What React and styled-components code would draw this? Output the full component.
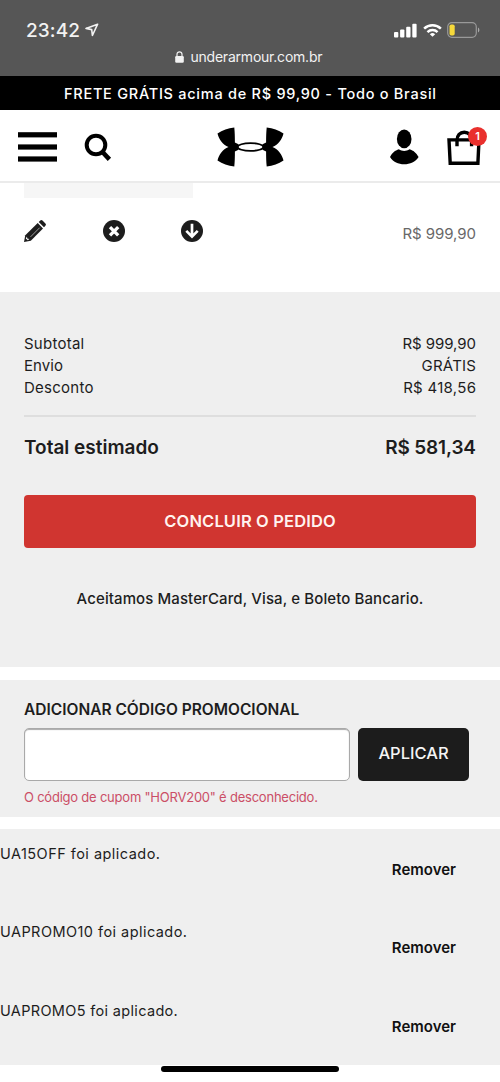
import React from 'react';
import styled, { createGlobalStyle } from 'styled-components';

const GlobalStyle = createGlobalStyle`
  *, *::before, *::after { box-sizing: border-box; }
  body { margin: 0; background: #fff; font-family: Inter, "Liberation Sans", sans-serif; color: #1d1d1d; }
  button, input { font-family: inherit; }
  button { cursor: pointer; border: 0; padding: 0; background: none; color: inherit; }
  svg { display: block; }
`;

const Screen = styled.div`
  width: 500px;
  height: 1082px;
  overflow: hidden;
  background: #fff;
`;

const Label = styled.span`
  white-space: nowrap;
  font-size: ${(p) => p.$size}px;
  font-weight: ${(p) => p.$weight || 400};
  letter-spacing: ${(p) => p.$track || 0}px;
  margin-right: ${(p) => -(p.$track || 0)}px;
`;

const BrowserBar = styled.div`
  height: 76px;
  background: #565656;
  color: #f2f2f2;
`;

const StatusRow = styled.div`
  height: 48px;
  padding: 12px 20px 0 26px;
  display: flex;
  align-items: center;
  justify-content: space-between;
`;

const Cluster = styled.div`
  display: flex;
  align-items: center;
  gap: ${(p) => p.$gap}px;
`;

const Address = styled.div`
  display: flex;
  align-items: center;
  justify-content: center;
  gap: 6px;
  height: 17px;
  padding-right: 2px;
`;

const Banner = styled.div`
  height: 34px;
  display: flex;
  align-items: center;
  justify-content: center;
  background: #000;
  color: #fff;
`;

const Header = styled.header`
  height: 73px;
  padding: 3px 17px 0 18px;
  border-bottom: 2px solid #ebebeb;
  display: grid;
  grid-template-columns: 1fr 68px 1fr;
  align-items: center;
`;

const HeaderSide = styled.div`
  display: flex;
  align-items: center;
  justify-content: ${(p) => (p.$end ? 'flex-end' : 'flex-start')};
  gap: 27px;
`;

const Bag = styled.button`
  position: relative;
  width: 41px;
  height: 40px;
  margin-right: -5px;
`;

const Badge = styled.span`
  position: absolute;
  top: 0;
  right: 1px;
  width: 19px;
  height: 19px;
  border-radius: 50%;
  background: #e9302d;
  color: #fff;
  font-size: 11px;
  font-weight: 600;
  line-height: 19px;
  text-align: center;
`;

const Product = styled.section`
  height: 109px;
  padding: 0 24px;
`;

const Strip = styled.div`
  width: 169px;
  height: 15px;
  background: #f6f6f6;
`;

const ProductRow = styled.div`
  display: flex;
  justify-content: space-between;
  align-items: center;
  height: 66px;
  color: #686868;
`;

const ItemPrice = styled.div`
  padding-top: 4px;
`;

const Actions = styled.div`
  display: flex;
  gap: 56.5px;
  color: #1d1d1d;
`;

const Summary = styled.section`
  height: 375px;
  padding: 41px 24px 0;
  background: #efefef;
`;

const SummaryRow = styled.div`
  display: flex;
  justify-content: space-between;
  line-height: 21.9px;
`;

const TotalRow = styled(SummaryRow)`
  margin-top: 16px;
  padding-top: 18px;
  border-top: 2px solid #dedede;
  line-height: 25px;
`;

const Checkout = styled.button`
  display: block;
  width: 100%;
  height: 53px;
  margin-top: 35px;
  border-radius: 4px;
  background: #d03530;
  color: #fff3ef;
`;

const Accepted = styled.p`
  margin: 40px 0 0;
  text-align: center;
  line-height: 20px;
`;

const Promo = styled.section`
  height: 137px;
  margin-top: 13px;
  padding: 20px 31px 0 24px;
  background: #efefef;
`;

const PromoTitle = styled.h2`
  display: flex;
  margin: 0 0 8px;
  line-height: 20px;
`;

const PromoForm = styled.div`
  display: flex;
  gap: 8px;
`;

const CodeInput = styled.input`
  width: 326px;
  height: 53px;
  border: 1px solid #a9a9a9;
  border-radius: 5px;
  background: #fff;
  box-shadow: inset 0 1px 1px #aaa;
  outline: none;
`;

const Apply = styled.button`
  width: 111px;
  height: 53px;
  padding-bottom: 3px;
  border-radius: 5px;
  background: #1c1c1c;
  color: #f5f5f5;
`;

const ErrorLine = styled.p`
  display: flex;
  margin: 7px 0 0;
  line-height: 18px;
  color: #cb4e66;
`;

const Coupons = styled.section`
  height: 236px;
  margin-top: 12px;
  background: #efefef;
`;

const Coupon = styled.div`
  height: 78.4px;
  padding: 15px 44px 0 0;
  display: flex;
  justify-content: space-between;
  align-items: flex-start;
  line-height: 20px;
`;

const Remove = styled.button`
  margin-top: 16px;
  line-height: 20px;
  color: #111;
`;

const HomeBar = styled.div`
  width: 178px;
  height: 6px;
  margin: 1px auto 0;
  border-radius: 3px;
  background: #000;
`;

const totals = [
  ['Subtotal', 'R$ 999,90', 0.25, -0.05],
  ['Envio', 'GRÁTIS', 0.05, 0.25],
  ['Desconto', 'R$ 418,56', 0.25, 0.3],
];

const coupons = [
  ['UA15OFF', 0.47],
  ['UAPROMO10', 0.45],
  ['UAPROMO5', 0.33],
];

const LocationIcon = () => (
  <svg width="14" height="14" viewBox="0 0 14 14" fill="none" stroke="#f2f2f2" strokeWidth="1.6" strokeLinejoin="round">
    <path d="M12.6 1.2 1 5.4l5.7 1.2.7 5.9Z" />
  </svg>
);

const SignalIcon = () => (
  <svg width="23" height="15" viewBox="0 0 23 15" fill="#fff">
    <rect x="0" y="9" width="4.3" height="5.5" rx="1" />
    <rect x="6.1" y="6.6" width="4.3" height="7.9" rx="1" />
    <rect x="12.2" y="3.8" width="4.3" height="10.7" rx="1" />
    <rect x="18.3" y="0.7" width="4.3" height="13.8" rx="1" />
  </svg>
);

const WifiIcon = () => (
  <svg width="19" height="15" viewBox="0 0 20 15" fill="none" stroke="#fff" strokeWidth="2.6">
    <path d="M1.2 5.6a12.6 12.6 0 0 1 17.6 0" />
    <path d="M4.7 9.1a7.6 7.6 0 0 1 10.6 0" />
    <path d="M10 14.2 7.2 11.5a4 4 0 0 1 5.6 0Z" fill="#fff" stroke="none" />
  </svg>
);

const BatteryIcon = () => (
  <svg width="33" height="16" viewBox="0 0 33 16">
    <rect x="0.7" y="0.7" width="28.6" height="14.6" rx="4.2" fill="none" stroke="#999" strokeWidth="1.2" />
    <path d="M31 5.5c1.8.8 1.8 4.2 0 5Z" fill="#aaa" />
    <rect x="2.5" y="2.5" width="5.2" height="11" rx="1.8" fill="#f6d93b" />
  </svg>
);

const LockIcon = () => (
  <svg width="9" height="12" viewBox="0 0 9 12">
    <rect x="0.2" y="5" width="8.6" height="6.8" rx="1.2" fill="#f2f2f2" />
    <path d="M2 5.5V3.3a2.5 2.5 0 0 1 5 0v2.2" fill="none" stroke="#f2f2f2" strokeWidth="1.2" />
  </svg>
);

const MenuIcon = () => (
  <svg width="39" height="30" viewBox="0 0 39 30" fill="#000">
    <rect width="39" height="5.2" y="0.2" />
    <rect width="39" height="5.2" y="12.4" />
    <rect width="39" height="5.2" y="24.4" />
  </svg>
);

const SearchIcon = () => (
  <svg width="28" height="29" viewBox="0 0 28 29" fill="none" stroke="#000">
    <circle cx="12" cy="12" r="9.3" strokeWidth="4" />
    <path d="m17.8 18.2 7.6 8.2" strokeWidth="4.6" />
  </svg>
);

const LogoHalf = () => (
  <path d="M0.500 6.500C5.500 3.200 11 1.200 17.300 0.500C17.800 5.500 17.900 10 17.900 15.500L21.500 17.200V22.800L17.900 24.500C17.900 30 17.800 34.500 17.300 39.500C11 38.800 5.500 36.800 0.500 33.500C2 27.500 5.500 22.500 11.500 20C5.500 17.500 2 12.500 0.500 6.500Z" />
);

const Logo = () => (
  <svg width="68" height="40" viewBox="0 0 68 40" fill="#000">
    <LogoHalf />
    <g transform="translate(67 0) scale(-1 1)">
      <LogoHalf />
    </g>
    <ellipse cx="33.5" cy="20" rx="12.8" ry="3.9" fill="#fff" stroke="#000" strokeWidth="1.8" />
  </svg>
);

const UserIcon = () => (
  <svg width="30" height="36" viewBox="0 0 30 36" fill="#000">
    <ellipse cx="14.2" cy="9.9" rx="7.3" ry="9.4" />
    <path d="M0 28C2.400 23.500 4.900 21.500 8.900 20.200C12 22.500 16.400 22.500 19.500 20.200C23.500 21.500 26 23.500 28.600 28C25.500 32.800 20 35.300 14.200 35.300S3 32.800 0 28Z" />
  </svg>
);

const BagIcon = () => (
  <svg width="41" height="40" viewBox="0 0 41 40" fill="none" stroke="#000">
    <path d="M2 12.9H32L30.900 36.200H3.200Z" strokeWidth="3.4" />
    <path d="M10 19.300V13.500c0-5 3-8.300 7.300-8.300s7.300 3.300 7.300 8.300v5.800" strokeWidth="3.4" />
  </svg>
);

const PencilIcon = () => (
  <svg width="22" height="22" viewBox="0 0 22 22">
    <path d="M0 22 1.3 15.2 13.7 3.1 19 8.4 6.8 20.7Z" fill="#1d1d1d" />
    <path d="m14.7 2.1 1.6-1.5c.7-.7 1.5-.7 2.2 0l2.9 2.9c.7.7.7 1.5 0 2.2L20 7.3Z" fill="#1d1d1d" />
    <path d="m6.5 16.9 9.2-9.2" stroke="#aaa" strokeWidth="0.9" />
    <path d="m3 16.6.2 2 2.1.4-1.500 1.300-2-1.900Z" fill="#fff" />
  </svg>
);

const RemoveIcon = () => (
  <svg width="22" height="22" viewBox="0 0 22 22">
    <circle cx="11" cy="11" r="11" fill="#1d1d1d" />
    <path d="m7 7.2 8.2 8.2m0-8.200L7 15.400" stroke="#fff" strokeWidth="3.3" />
  </svg>
);

const SaveIcon = () => (
  <svg width="22" height="22" viewBox="0 0 22 22" fill="none">
    <circle cx="11" cy="11" r="11" fill="#1d1d1d" />
    <path d="M11 3.8V17M5.3 10.9 11 16.6l5.700-5.700" stroke="#fff" strokeWidth="2.7" />
  </svg>
);

export default function App() {
  return (
    <Screen>
      <GlobalStyle />
      <BrowserBar>
        <StatusRow>
          <Cluster $gap={5}>
            <Label $size={19} $weight={500} $track={0.1}>23:42</Label>
            <LocationIcon />
          </Cluster>
          <Cluster $gap={5.5}>
            <SignalIcon />
            <WifiIcon />
            <BatteryIcon />
          </Cluster>
        </StatusRow>
        <Address>
          <LockIcon />
          <Label $size={14} $track={-0.22}>underarmour.com.br</Label>
        </Address>
      </BrowserBar>
      <Banner>
        <Label $size={14.5} $weight={500} $track={0.74}>FRETE GRÁTIS acima de R$ 99,90 - Todo o Brasil</Label>
      </Banner>
      <Header>
        <HeaderSide>
          <button aria-label="Menu"><MenuIcon /></button>
          <button aria-label="Buscar"><SearchIcon /></button>
        </HeaderSide>
        <Logo />
        <HeaderSide $end>
          <button aria-label="Conta"><UserIcon /></button>
          <Bag aria-label="Sacola">
            <BagIcon />
            <Badge>1</Badge>
          </Bag>
        </HeaderSide>
      </Header>
      <Product>
        <Strip />
        <ProductRow>
          <Actions>
            <button aria-label="Editar"><PencilIcon /></button>
            <button aria-label="Excluir"><RemoveIcon /></button>
            <button aria-label="Salvar"><SaveIcon /></button>
          </Actions>
          <ItemPrice>
            <Label $size={15} $track={-0.05}>R$ 999,90</Label>
          </ItemPrice>
        </ProductRow>
      </Product>
      <Summary>
        {totals.map(([name, value, nameTrack, valueTrack]) => (
          <SummaryRow key={name}>
            <Label $size={15} $track={nameTrack}>{name}</Label>
            <Label $size={15} $track={valueTrack}>{value}</Label>
          </SummaryRow>
        ))}
        <TotalRow>
          <Label $size={19} $weight={600}>Total estimado</Label>
          <Label $size={19} $weight={600} $track={-0.15}>R$ 581,34</Label>
        </TotalRow>
        <Checkout>
          <Label $size={16.5} $weight={600} $track={0.15}>CONCLUIR O PEDIDO</Label>
        </Checkout>
        <Accepted>
          <Label $size={15} $weight={500} $track={0.1}>Aceitamos MasterCard, Visa, e Boleto Bancario.</Label>
        </Accepted>
      </Summary>
      <Promo>
        <PromoTitle>
          <Label $size={15.5} $weight={600}>ADICIONAR CÓDIGO PROMOCIONAL</Label>
        </PromoTitle>
        <PromoForm>
          <CodeInput aria-label="Código promocional" />
          <Apply>
            <Label $size={16.5} $weight={500}>APLICAR</Label>
          </Apply>
        </PromoForm>
        <ErrorLine>
          <Label $size={13} $track={-0.22}>O código de cupom "HORV200" é desconhecido.</Label>
        </ErrorLine>
      </Promo>
      <Coupons>
        {coupons.map(([code, track]) => (
          <Coupon key={code}>
            <Label $size={14.5} $track={track}>{code} foi aplicado.</Label>
            <Remove>
              <Label $size={15} $weight={600}>Remover</Label>
            </Remove>
          </Coupon>
        ))}
      </Coupons>
      <HomeBar />
    </Screen>
  );
}
